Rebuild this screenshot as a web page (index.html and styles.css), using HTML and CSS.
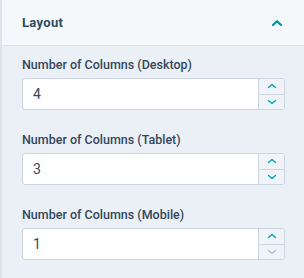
FILE: index.html
```html
<!DOCTYPE html>
<html>
<head>
<meta charset="utf-8">
<link rel="stylesheet" href="styles.css">
</head>
<body>
<div class="panel">
  <div class="header">
    <span class="title">Layout</span>
    <svg class="caret" width="12" height="8" viewBox="0 0 12 8"><path d="M2 6 L6 2.2 L10 6" fill="none" stroke="#0091ae" stroke-width="2.2" stroke-linecap="round" stroke-linejoin="round"/></svg>
  </div>
  <div class="body">
    <div class="field">
      <div class="label">Number of Columns (Desktop)</div>
      <div class="input">
        <div class="value">4</div>
        <div class="stepper">
          <div class="step"><svg width="10" height="6" viewBox="0 0 10 6"><path d="M1.5 4.5 L5 1.5 L8.5 4.5" fill="none" stroke="#00a4bd" stroke-width="1.4" stroke-linecap="round" stroke-linejoin="round"/></svg></div>
          <div class="step"><svg width="10" height="6" viewBox="0 0 10 6"><path d="M1.5 1.5 L5 4.5 L8.5 1.5" fill="none" stroke="#00a4bd" stroke-width="1.4" stroke-linecap="round" stroke-linejoin="round"/></svg></div>
        </div>
      </div>
    </div>
    <div class="field">
      <div class="label">Number of Columns (Tablet)</div>
      <div class="input">
        <div class="value">3</div>
        <div class="stepper">
          <div class="step"><svg width="10" height="6" viewBox="0 0 10 6"><path d="M1.5 4.5 L5 1.5 L8.5 4.5" fill="none" stroke="#00a4bd" stroke-width="1.4" stroke-linecap="round" stroke-linejoin="round"/></svg></div>
          <div class="step"><svg width="10" height="6" viewBox="0 0 10 6"><path d="M1.5 1.5 L5 4.5 L8.5 1.5" fill="none" stroke="#00a4bd" stroke-width="1.4" stroke-linecap="round" stroke-linejoin="round"/></svg></div>
        </div>
      </div>
    </div>
    <div class="field">
      <div class="label">Number of Columns (Mobile)</div>
      <div class="input">
        <div class="value">1</div>
        <div class="stepper">
          <div class="step"><svg width="10" height="6" viewBox="0 0 10 6"><path d="M1.5 4.5 L5 1.5 L8.5 4.5" fill="none" stroke="#00a4bd" stroke-width="1.4" stroke-linecap="round" stroke-linejoin="round"/></svg></div>
          <div class="step"><svg width="10" height="6" viewBox="0 0 10 6"><path d="M1.5 1.5 L5 4.5 L8.5 1.5" fill="none" stroke="#b0c1d4" stroke-width="1.4" stroke-linecap="round" stroke-linejoin="round"/></svg></div>
        </div>
      </div>
    </div>
  </div>
</div>
</body>
</html>
```
FILE: styles.css
```css
html, body {
  margin: 0;
  padding: 0;
  width: 304px;
  height: 278px;
  overflow: hidden;
  background: #eaf0f6;
}
.panel {
  height: 278px;
  border-left: 2px solid #dfe3eb;
  font-family: "Roboto", "Noto Sans", sans-serif;
  color: #33475b;
  box-sizing: border-box;
}
.header {
  height: 45px;
  background: #f5f8fa;
  border-bottom: 1px solid #dfe3eb;
  display: flex;
  align-items: center;
  justify-content: space-between;
  padding: 0 21px 0 20px;
}
.title {
  font-size: 13px;
  font-weight: 700;
  color: #2d4d5c;
  letter-spacing: 0.3px;
}
.caret {
  display: block;
}
.body {
  padding: 9px 19px 0 20px;
  display: flex;
  flex-direction: column;
  gap: 20px;
}
.field {
  display: flex;
  flex-direction: column;
  gap: 3px;
}
.label {
  font-size: 12.5px;
  line-height: 20px;
  font-weight: 500;
  color: #33475b;
}
.input {
  height: 32px;
  box-sizing: border-box;
  border: 1px solid #cbd6e2;
  border-radius: 3px;
  background: #fff;
  display: flex;
  overflow: hidden;
}
.value {
  flex: 1;
  padding-left: 10px;
  font-size: 14px;
  line-height: 30px;
  color: #33475b;
}
.stepper {
  width: 25px;
  border-left: 1px solid #cbd6e2;
  display: flex;
  flex-direction: column;
  background: #f0f4f8;
}
.step {
  flex: 1;
  display: flex;
  align-items: center;
  justify-content: center;
}
.step + .step {
  border-top: 1px solid #cbd6e2;
}
.step svg {
  display: block;
}
```
